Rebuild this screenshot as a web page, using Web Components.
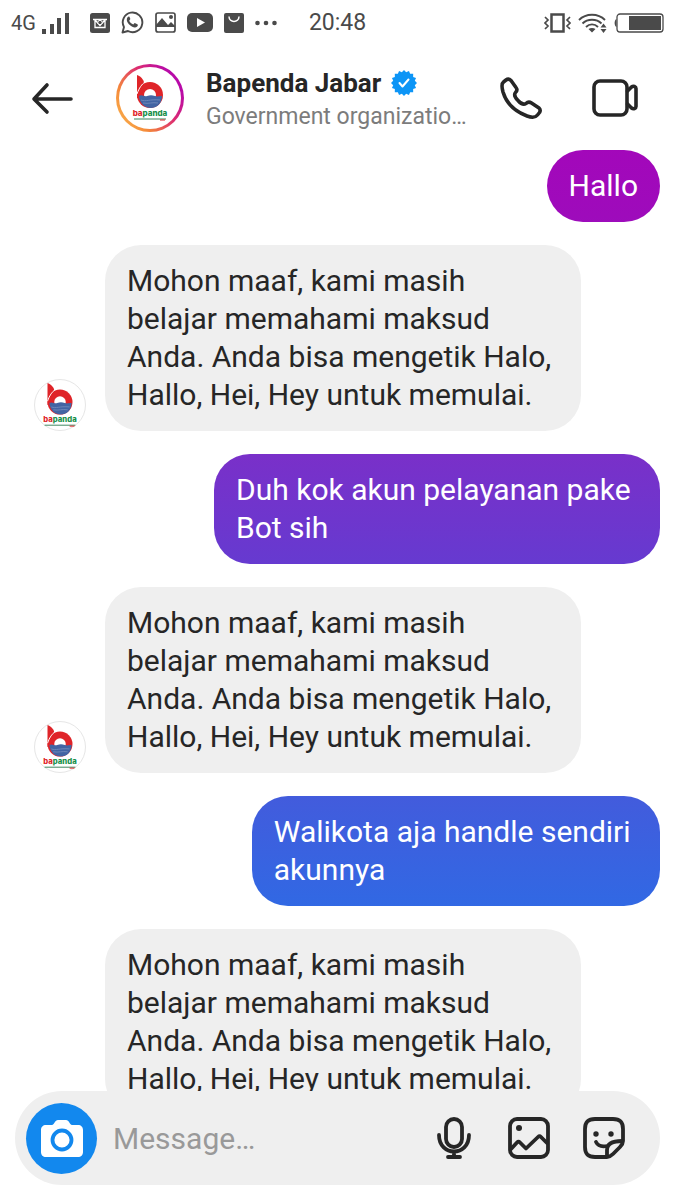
<!DOCTYPE html>
<html lang="id">
<head>
<meta charset="utf-8">
<meta name="viewport" content="width=device-width, initial-scale=1">
<title>Bapenda Jabar</title>
<style>
    body {
        margin: 0;
        background: #fff;
        color: #262626;
        font-family: Roboto, "Liberation Sans", sans-serif;
    }
</style>
</head>
<body>
<chat-screen>
    <status-bar slot="status" network="4G" time="20:48"></status-bar>
    <chat-header slot="header" name="Bapenda Jabar" category="Government organizatio…"></chat-header>

    <chat-message from="me">Hallo</chat-message>
    <chat-message from="them">Mohon maaf, kami masih 
belajar memahami maksud 
Anda. Anda bisa mengetik Halo, 
Hallo, Hei, Hey untuk memulai.</chat-message>
    <chat-message from="me">Duh kok akun pelayanan pake 
Bot sih</chat-message>
    <chat-message from="them">Mohon maaf, kami masih 
belajar memahami maksud 
Anda. Anda bisa mengetik Halo, 
Hallo, Hei, Hey untuk memulai.</chat-message>
    <chat-message from="me">Walikota aja handle sendiri 
akunnya</chat-message>
    <chat-message from="them" grouped>Mohon maaf, kami masih 
belajar memahami maksud 
Anda. Anda bisa mengetik Halo, 
Hallo, Hei, Hey untuk memulai.</chat-message>

    <message-composer slot="composer"></message-composer>
</chat-screen>

<script>
class ChatScreen extends HTMLElement {
    connectedCallback() {
        this.attachShadow({ mode: "open" });
        this.shadowRoot.innerHTML = `
            <style>
                :host {
                    display: flex;
                    flex-direction: column;
                    height: 100vh;
                }

                main {
                    display: flex;
                    flex: 1;
                    flex-direction: column;
                    gap: 23px;
                    min-height: 0;
                    padding: 0 15px 0 34px;
                    overflow: hidden;
                }
            </style>

            <slot name="status"></slot>
            <slot name="header"></slot>
            <main><slot></slot></main>
            <slot name="composer"></slot>
        `;
    }
}

class StatusBar extends HTMLElement {
    connectedCallback() {
        this.attachShadow({ mode: "open" });
        this.shadowRoot.innerHTML = `
            <style>
                :host {
                    display: flex;
                    align-items: center;
                    height: 45px;
                    padding: 0 11px;
                    color: #4a4a4a;
                }

                svg {
                    display: block;
                    flex: none;
                }

                .network {
                    font-size: 20px;
                    margin-right: 6px;
                }

                .icons {
                    display: flex;
                    align-items: center;
                    gap: 11px;
                    margin-left: 20px;
                }

                .time {
                    margin-left: 32px;
                    font-size: 23px;
                }

                .system {
                    gap: 7px;
                    margin-left: auto;
                }
            </style>

            <span class="network"></span>
            <svg width="28" height="22" fill="currentColor">
                <path d="M0 17h4v5H0zM8 12h4v10H8zM15 6h4v16h-4zM23 1h4v21h-4z"/>
            </svg>
            <div class="icons">
                <svg width="20" height="20">
                    <rect width="20" height="20" rx="2.5" fill="#4a4a4a"/>
                    <path d="M3 6.5h14M5 7v7.500h10V7M5.500 7.500l4.500 5 4.500-5" fill="none" stroke="#fff" stroke-width="1.3"/>
                    <circle cx="10" cy="9.5" r="2.2" fill="#4a4a4a" stroke="#fff"/>
                </svg>
                <svg width="23" height="23" viewBox="0 0 23 23">
                    <path d="M1.5 21.5l1.5-5.400A9.800 9.800 0 1 1 7 20z" fill="none" stroke="#4a4a4a" stroke-width="1.9" stroke-linejoin="round"/>
                    <path d="M8.4 5.7c-.5-.4-1.200-.2-1.600.3-2.200 2.600-.4 5.900 2 8.100 2.500 2.300 5.500 3.500 7.400 1.500.9-1 .8-1.900.2-2.300l-2.200-1.100c-.5-.2-.8 0-1.100.4l-.8.9c-1.900-.8-3.300-2.100-4.100-3.800l.9-1.200c.2-.3.2-.6.1-.9z" fill="#4a4a4a"/>
                </svg>
                <svg width="21" height="21">
                    <rect x="1" y="1" width="19" height="19" rx="2" fill="none" stroke="#4a4a4a" stroke-width="1.7"/>
                    <path d="M1 13l6-7 6 7 3-3 4 4v1H1z" fill="#4a4a4a"/>
                    <circle cx="16" cy="5" r="2" fill="#4a4a4a"/>
                </svg>
                <svg width="26" height="19">
                    <rect width="26" height="19" rx="5" fill="#4a4a4a"/>
                    <path d="M10 5l8 4.5-8 4.5z" fill="#fff"/>
                </svg>
                <svg width="20" height="20">
                    <rect width="20" height="20" rx="2" fill="#4a4a4a"/>
                    <path d="M5 3.5c0 6.500 10 6.500 10 0" fill="none" stroke="#fff" stroke-width="1.5"/>
                </svg>
                <svg width="22" height="6" fill="#4a4a4a">
                    <circle cx="2.5" cy="3" r="2.3"/><circle cx="11" cy="3" r="2.3"/><circle cx="19.5" cy="3" r="2.3"/>
                </svg>
            </div>
            <span class="time"></span>
            <div class="icons system">
                <svg width="27" height="20" fill="none" stroke="#4a4a4a">
                    <rect x="7.5" y="1.5" width="12" height="17" stroke-width="2.5"/>
                    <path d="M1 4l3 3-3 3 3 3-3 3M26 4l-3 3 3 3-3 3 3 3" stroke-width="1.7"/>
                </svg>
                <svg width="29" height="20" fill="none" stroke="#4a4a4a" stroke-width="1.9">
                    <path d="M1 7c7-7 19-7 26 0M4.500 10.500c5-5 14-5 19 0M8 14c3.500-3.500 8.500-3.500 12 0"/>
                    <path d="M10.500 16c2-1.500 5-1.500 7 0L14 19.500zM22.500 14.500l3-4 3 4zM22.500 16l3 4 3-4z" fill="#4a4a4a" stroke="none"/>
                </svg>
                <svg width="50" height="20">
                    <rect x="3" y="1" width="46" height="18" rx="3" fill="none" stroke="#4a4a4a" stroke-width="1.3"/>
                    <path d="M2.5 6C0 7 0 13 2.5 14z" fill="#4a4a4a"/>
                    <path d="M15 3h32v14H15z" fill="#4a4a4a"/>
                </svg>
            </div>
        `;

        this.shadowRoot.querySelector(".network").textContent = this.getAttribute("network");
        this.shadowRoot.querySelector(".time").textContent    = this.getAttribute("time");
    }
}

// Round account logo. The "story" attribute adds the gradient ring.
class AccountAvatar extends HTMLElement {
    connectedCallback() {
        this.attachShadow({ mode: "open" });
        this.shadowRoot.innerHTML = `
            <style>
                :host {
                    display: block;
                    flex: none;
                    box-sizing: border-box;
                    width: 52px;
                    height: 52px;
                    border: 1px solid #e6e6e6;
                    border-radius: 50%;
                }

                :host([story]) {
                    width: 68px;
                    height: 68px;
                    padding: 5px;
                    border: 3px solid transparent;
                    background:
                        linear-gradient(#fff, #fff) padding-box,
                        linear-gradient(55deg, #f9b04b 8%, #f58a3a 28%, #dc2b72 58%, #b80aa8 82%) border-box;
                }

                svg {
                    display: block;
                    width: 100%;
                    height: 100%;
                }

                text {
                    font: 800 8px Inter, sans-serif;
                }
            </style>

            <svg viewBox="0 0 52 52" role="img" aria-label="bapanda">
                <path d="M13 3c5 2 8 6 7 11l-4 12h-3z" fill="#df2429"/>
                <circle cx="26" cy="23" r="13" fill="#df2429"/>
                <path d="M21 10c-3 2-6 6-8 12" fill="none" stroke="#fff" stroke-width="1"/>
                <circle cx="26" cy="23" r="6" fill="#fff"/>
                <path d="M15 24c3-2 5 1 8 0s5-1 8 0 4 0 7 0c0 16-22 16-23 0z" fill="#4264a3"/>
                <path d="M17 28c5 2 8-1 19 0M19 31c6 1 9-1 15 0" fill="none" stroke="#6d86b8"/>
                <text x="26" y="44" text-anchor="middle"><tspan fill="#df2429">ba</tspan><tspan fill="#18904a">panda</tspan></text>
                <path d="M10 47h32" stroke="#39845b" stroke-width="1"/>
                <path d="M36 48h5" stroke="#df2429" stroke-width="1"/>
            </svg>
        `;
    }
}

class ChatHeader extends HTMLElement {
    connectedCallback() {
        this.attachShadow({ mode: "open" });
        this.shadowRoot.innerHTML = `
            <style>
                :host {
                    display: block;
                }

                header {
                    display: flex;
                    align-items: center;
                    height: 105px;
                    padding: 0 37px 0 31px;
                }

                button {
                    flex: none;
                    padding: 0;
                    border: 0;
                    background: none;
                    color: inherit;
                }

                svg {
                    display: block;
                    fill: none;
                    stroke: currentColor;
                    stroke-width: 3.6;
                    stroke-linecap: round;
                    stroke-linejoin: round;
                }

                account-avatar {
                    margin: 0 22px 0 42px;
                }

                .title {
                    flex: 1;
                    min-width: 0;
                    padding-top: 4px;
                }

                h1 {
                    display: flex;
                    align-items: center;
                    gap: 10px;
                    margin: 0;
                    font-size: 26px;
                    font-weight: 700;
                    line-height: 34px;
                }

                p {
                    margin: 0;
                    color: #7c7c7c;
                    font-size: 23px;
                    line-height: 34px;
                    white-space: nowrap;
                }

                .actions {
                    display: flex;
                    align-items: center;
                    gap: 50px;
                }
            </style>

            <header>
                <button aria-label="Back">
                    <svg width="43" height="34"><path d="M40 18H4M16 4L3 18l13 13"/></svg>
                </button>
                <account-avatar story></account-avatar>
                <div class="title">
                    <h1>
                        <span id="name"></span>
                        <svg width="26" height="26" viewBox="-13 -13 26 26" role="img" aria-label="Verified">
                            <path id="seal" fill="#0d95f6" stroke="none"/>
                            <path d="M-4.500 0l3 3.500 6-7" stroke="#fff" stroke-width="2" style="stroke-width: 2"/>
                        </svg>
                    </h1>
                    <p id="category"></p>
                </div>
                <div class="actions">
                    <button aria-label="Audio call">
                        <svg width="42" height="42">
                            <path d="M6 3Q8.500 1 11 3.500L16 10.500Q18 13 15.500 15.500C13.500 18 15 20.500 18 23.500C21 27 23.500 28 26 26.500Q28.500 24 31.500 26L39 31Q41 33 39.500 35.500L37.500 38C35.500 40.500 31 40.500 27 39C14 34 6 25 3 15C1.500 9.500 1.500 6.500 3.500 5z"/>
                        </svg>
                    </button>
                    <button aria-label="Video call">
                        <svg width="46" height="38">
                            <rect x="2" y="2" width="33" height="34" rx="6"/>
                            <path d="M35.500 12l4-4c2-1.500 4.500-.5 4.500 1.500v18c0 2-2.500 3-4.500 1.500l-4-4"/>
                        </svg>
                    </button>
                </div>
            </header>
        `;

        this.shadowRoot.querySelector("#name").textContent     = this.getAttribute("name");
        this.shadowRoot.querySelector("#category").textContent = this.getAttribute("category");

        // Seal outline with sixteen teeth
        const points = [];
        for (let i = 0; i < 32; i++) {
            const radius = i % 2 === 0 ? 13 : 11;
            const angle  = i * Math.PI / 16;
            points.push(`${(radius * Math.sin(angle)).toFixed(2)} ${(-radius * Math.cos(angle)).toFixed(2)}`);
        }
        this.shadowRoot.querySelector("#seal").setAttribute("d", `M${points.join("L")}Z`);
    }
}

// A "grouped" message keeps the avatar's column but leaves it empty.
class ChatMessage extends HTMLElement {
    connectedCallback() {
        const incoming = this.getAttribute("from") === "them";

        this.attachShadow({ mode: "open" });
        this.shadowRoot.innerHTML = `
            <style>
                :host {
                    display: flex;
                    flex: none;
                    align-items: flex-end;
                    gap: 19px;
                }

                :host([from="me"]) {
                    justify-content: flex-end;
                }

                :host([grouped]) account-avatar {
                    visibility: hidden;
                }

                .bubble {
                    padding: 17px 22px;
                    border-radius: 36px;
                    background: #efefef;
                    font-size: 30px;
                    line-height: 38px;
                    white-space: break-spaces;
                }

                /* One gradient for the whole window, seen through each bubble */
                :host([from="me"]) .bubble {
                    background: linear-gradient(#a307ba 12%, #9e0bbb 18%, #7930c9 38%, #663ad0 47%, #435bdc 66%, #3069e4 76%) fixed;
                    color: #fff;
                }
            </style>

            ${incoming ? "<account-avatar></account-avatar>" : ""}
            <div class="bubble"><slot></slot></div>
        `;
    }
}

class MessageComposer extends HTMLElement {
    connectedCallback() {
        this.attachShadow({ mode: "open" });
        this.shadowRoot.innerHTML = `
            <style>
                :host {
                    display: block;
                    padding: 0 15px 15px;
                }

                form {
                    display: flex;
                    align-items: center;
                    gap: 33px;
                    height: 94px;
                    box-sizing: border-box;
                    padding: 0 35px 0 11px;
                    border-radius: 47px;
                    background: #efefef;
                }

                button {
                    display: flex;
                    flex: none;
                    align-items: center;
                    justify-content: center;
                    width: 42px;
                    height: 42px;
                    padding: 0;
                    border: 0;
                    background: none;
                    color: inherit;
                }

                .camera {
                    width: 71px;
                    height: 71px;
                    margin-right: -17px;
                    border-radius: 50%;
                    background: #1288ee;
                }

                input {
                    flex: 1;
                    min-width: 0;
                    padding: 0;
                    border: 0;
                    outline: 0;
                    background: none;
                    color: inherit;
                    font: inherit;
                    font-size: 30px;
                }

                input::placeholder {
                    color: #999;
                    opacity: 1;
                }

                svg {
                    display: block;
                    fill: none;
                    stroke: currentColor;
                    stroke-width: 3.8;
                    stroke-linecap: round;
                    stroke-linejoin: round;
                }
            </style>

            <form>
                <button class="camera" type="button" aria-label="Camera">
                    <svg width="42" height="38">
                        <path d="M5 6h6c2 0 3-5 6-5h8c3 0 4 5 6 5h6c3 0 5 2 5 5v22c0 3-2 5-5 5H5c-3 0-5-2-5-5V11c0-3 2-5 5-5z" fill="#fff" stroke="none"/>
                        <circle cx="21" cy="21" r="9.5" stroke="#1288ee"/>
                    </svg>
                </button>
                <input type="text" placeholder="Message…" aria-label="Message">
                <button type="button" aria-label="Voice message">
                    <svg width="34" height="42">
                        <rect x="9" y="2" width="16" height="28" rx="8"/>
                        <path d="M2 18c0 22 30 22 30 0M17 35v4M11 40h12"/>
                    </svg>
                </button>
                <button type="button" aria-label="Photo">
                    <svg width="42" height="42">
                        <rect x="2" y="2" width="38" height="38" rx="7"/>
                        <path d="M3 32l6-6.500c1-1 2-1 3 0l6 6 12-11.500c1-1 2-1 3 0l6 6"/>
                        <circle cx="11" cy="11" r="3" fill="currentColor" stroke="none"/>
                    </svg>
                </button>
                <button type="button" aria-label="Sticker">
                    <svg width="42" height="42">
                        <path d="M40 24V12C40 5 37 2 30 2H12C5 2 2 5 2 12v18c0 7 3 10 10 10h12c3 0 4-1 6-3l7-7c2-2 3-3 3-6z"/>
                        <path d="M39 24c-9 0-15 2-15 9v6M13 25c2 4 6 5 11 4"/>
                        <circle cx="13" cy="17" r="2.7" fill="currentColor" stroke="none"/>
                        <circle cx="28" cy="17" r="2.7" fill="currentColor" stroke="none"/>
                    </svg>
                </button>
            </form>
        `;
    }
}

customElements.define("account-avatar", AccountAvatar);
customElements.define("status-bar", StatusBar);
customElements.define("chat-header", ChatHeader);
customElements.define("chat-message", ChatMessage);
customElements.define("message-composer", MessageComposer);
customElements.define("chat-screen", ChatScreen);
</script>
</body>
</html>
